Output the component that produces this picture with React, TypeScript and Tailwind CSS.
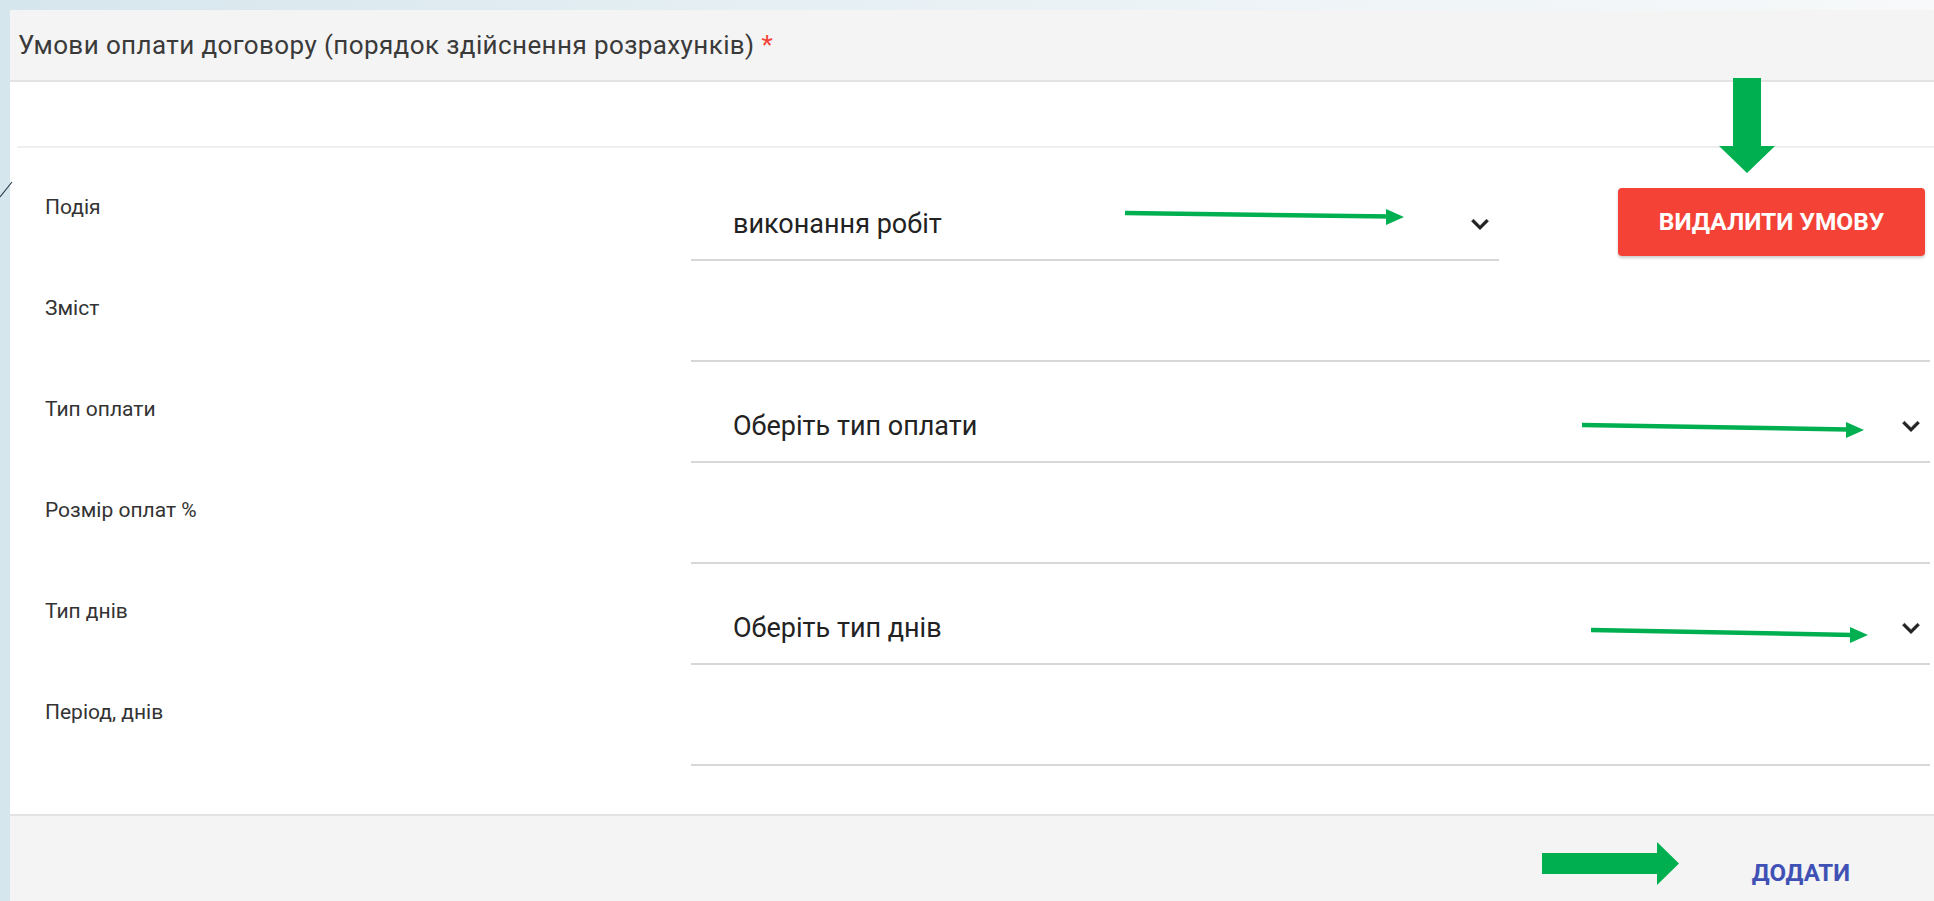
import React from 'react';

const font = { fontFamily: 'Roboto, "Noto Sans", sans-serif' };

const Chevron: React.FC = () => (
    <svg width="34" height="34" viewBox="0 0 24 24" className="shrink-0">
        <path d="M7.41 8.59 12 13.17l4.59-4.58L18 10l-6 6-6-6z" fill="#222" stroke="#222" strokeWidth="0.4" />
    </svg>
);

type Row = { label: string; value?: string; select?: boolean };

const rows: Row[] = [
    { label: 'Подія', value: 'виконання робіт', select: true },
    { label: 'Зміст' },
    { label: 'Тип оплати', value: 'Оберіть тип оплати', select: true },
    { label: 'Розмір оплат %' },
    { label: 'Тип днів', value: 'Оберіть тип днів', select: true },
    { label: 'Період, днів' },
];

const Field: React.FC<{ row: Row; className?: string }> = ({ row, className }) => (
    <div className={`self-end h-[72px] border-b-2 border-[#d7d7d7] flex items-center pl-[42px] pr-[2px] ${className ?? ''}`}>
        <span className="flex-1 text-[27px] text-[#222] truncate">{row.value ?? ''}</span>
        {row.select && <Chevron />}
    </div>
);

const App: React.FC = () => {
    return (
        <div
            style={font}
            className="relative w-[1934px] h-[901px] overflow-hidden bg-linear-to-r from-[#d6e6ed] via-[#e9f1f5] to-[#f7f9fa] pl-[10px] pt-[10px]"
        >
            <div className="w-full h-full bg-white flex flex-col">
                {/* header */}
                <div className="h-[72px] shrink-0 bg-[#f4f4f4] border-b-2 border-[#e3e3e3] flex items-center pl-[8px] text-[26px] tracking-[0.4px] text-[#3a3a3a]">
                    Умови оплати договору (порядок здійснення розрахунків)
                    <span className="ml-[7px] text-[#f44336]">*</span>
                </div>
                <div className="ml-[7px] h-[66px] shrink-0 border-b-2 border-[#efefef]" />

                {/* form rows */}
                <div className="pt-[12px] pl-[35px] flex flex-col">
                    {rows.map((row, i) => (
                        <div key={row.label} className="h-[101px] flex">
                            <div className="w-[646px] shrink-0 pt-[35px] text-[21px] leading-[24px] text-[#333]">
                                {row.label}
                            </div>
                            {i === 0 ? (
                                <>
                                    <Field row={row} className="w-[808px]" />
                                    <button className="ml-auto mr-[9px] mt-[28px] w-[307px] h-[68px] rounded-[4px] bg-[#f44336] text-white text-[24.5px] font-bold uppercase shadow-[0_2px_3px_rgba(0,0,0,0.2)]">
                                        Видалити умову
                                    </button>
                                </>
                            ) : (
                                <Field row={row} className="flex-1 mr-[4px]" />
                            )}
                        </div>
                    ))}
                </div>

                <div className="flex-1" />

                {/* footer */}
                <div className="h-[87px] shrink-0 bg-[#f4f4f4] border-t-2 border-[#e3e3e3] flex justify-end items-start pt-[43px] pr-[84px]">
                    <button className="text-[24px] leading-[28px] font-bold text-[#3f51b5] uppercase">Додати</button>
                </div>
            </div>

            {/* pointer annotations */}
            <svg className="absolute left-0 top-0 pointer-events-none" width="1934" height="901">
                <line x1="0" y1="197" x2="12" y2="182" stroke="#2c3e50" strokeWidth="1.2" />
                <g fill="#00b050" stroke="#00b050">
                    <line x1="1125" y1="213" x2="1390" y2="216.5" strokeWidth="4.5" />
                    <polygon points="1386,209 1404,217 1386,225" strokeWidth="0" />
                    <line x1="1582" y1="425" x2="1848" y2="429.5" strokeWidth="4.5" />
                    <polygon points="1846,422 1864,430 1846,438" strokeWidth="0" />
                    <line x1="1591" y1="630" x2="1852" y2="635" strokeWidth="4.5" />
                    <polygon points="1850,627 1868,635 1850,643" strokeWidth="0" />
                    <polygon points="1733,78 1761,78 1761,146 1775,146 1747,173 1719,146 1733,146" strokeWidth="0" />
                    <polygon points="1542,853 1657,853 1657,842 1679,863.5 1657,885 1657,874 1542,874" strokeWidth="0" />
                </g>
            </svg>
        </div>
    );
};

export default App;
